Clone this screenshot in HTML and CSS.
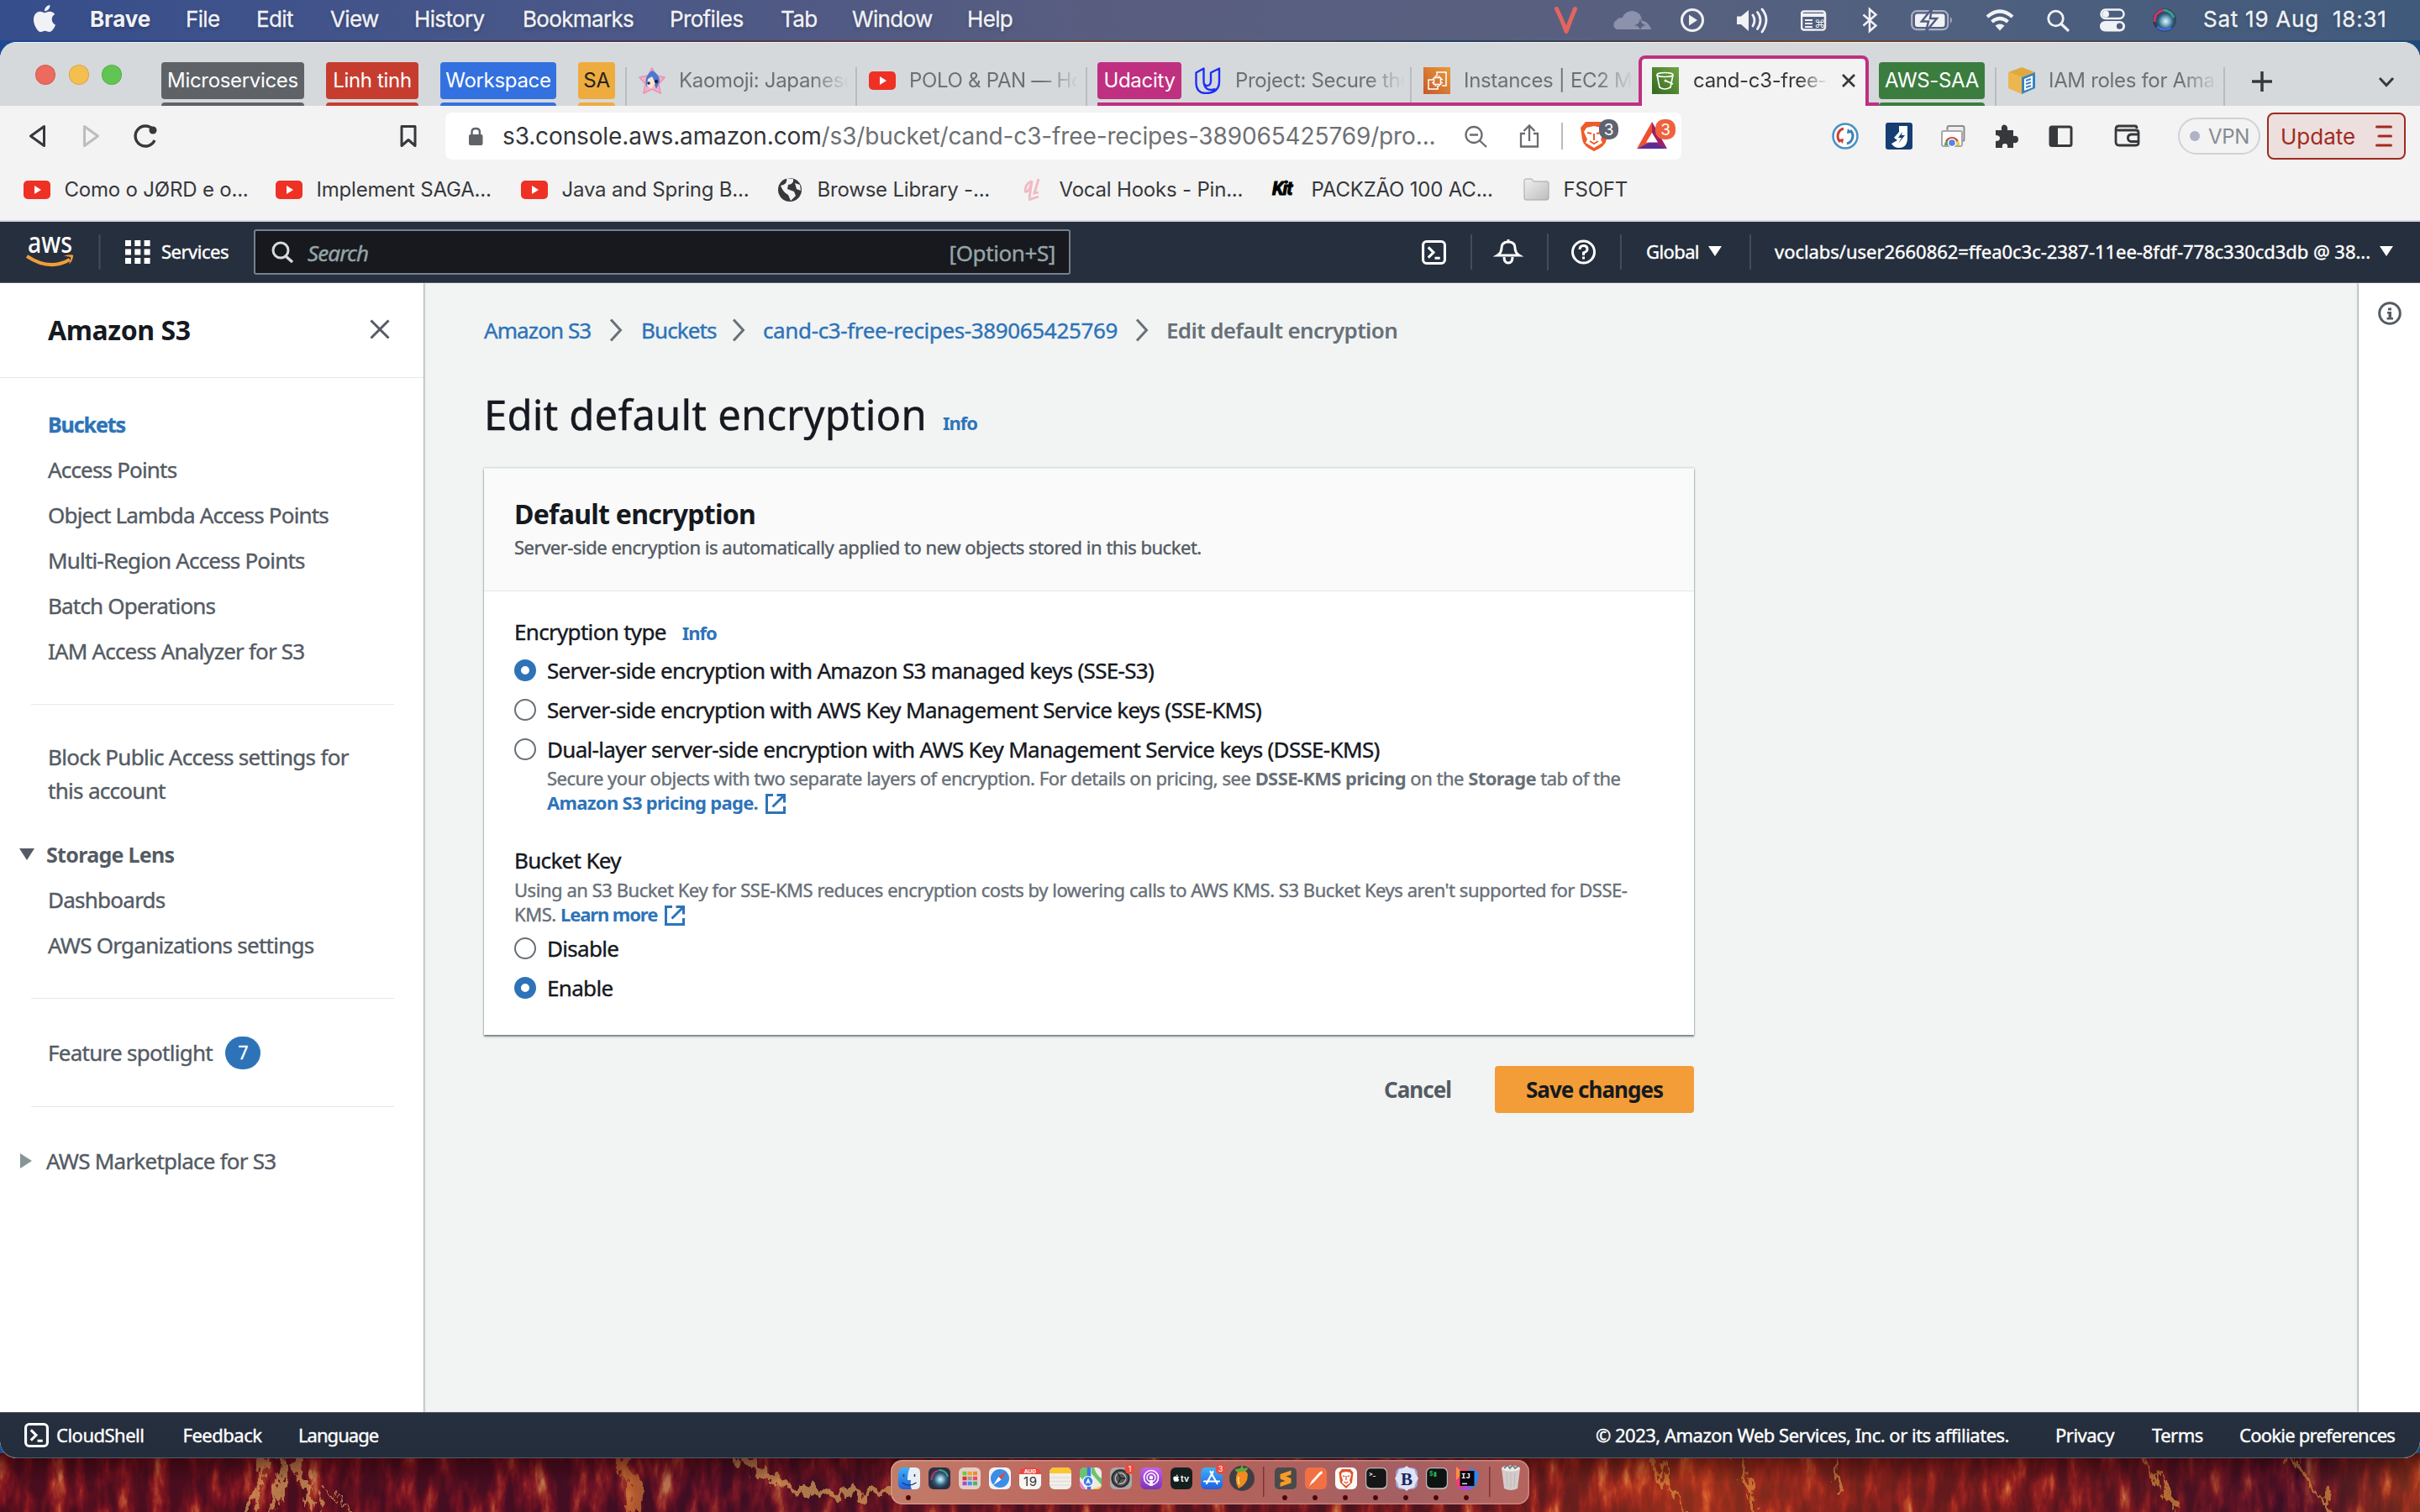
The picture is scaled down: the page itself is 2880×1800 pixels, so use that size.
FILE: index.html
```html
<!DOCTYPE html>
<html lang="en">
<head>
<meta charset="utf-8">
<title>cand-c3-free-recipes - S3 bucket</title>
<link rel="stylesheet" href="styles.css">
</head>
<body>
<svg class="defs" width="0" height="0">
  <symbol id="yt" viewBox="0 0 32 22"><rect width="32" height="22" rx="5" fill="#ee3124"/><path d="M13 6l8 5-8 5z" fill="#fff"/></symbol>
  <symbol id="ext" viewBox="0 0 26 26"><path d="M10 2.5H2.5v21h21V16M14.500 2.500h9v9M23 3L9.500 16.500" fill="none" stroke="#2e73b8" stroke-width="3"/></symbol>
  <symbol id="shell" viewBox="0 0 28 28"><rect x="1.500" y="1.500" width="25" height="25" rx="4" fill="none" stroke="#fff" stroke-width="3"/><path d="M7.500 8l6 6-6 6M15 20.500h6" fill="none" stroke="#fff" stroke-width="3"/></symbol>
  <symbol id="crumb" viewBox="0 0 16 28"><path d="M2 1.500L13.500 14 2 26.500" fill="none" stroke="#687078" stroke-width="3"/></symbol>
  <radialGradient id="siri" cx=".55" cy=".55" r=".55"><stop offset="0" stop-color="#e4f6fa"/><stop offset=".3" stop-color="#7fb4c8"/><stop offset=".6" stop-color="#2d5a78"/><stop offset="1" stop-color="#2a2b40"/></radialGradient>
  <linearGradient id="blue" x2="0" y2="1"><stop stop-color="#3fb0f7"/><stop offset="1" stop-color="#2160dd"/></linearGradient>
  <linearGradient id="folder" x2="1" y2="1"><stop stop-color="#f0f0f0"/><stop offset="1" stop-color="#bdbdbd"/></linearGradient>
  <linearGradient id="ec2" x1="0" y1="1" x2="1" y2="0"><stop stop-color="#c45a2a"/><stop offset="1" stop-color="#eb9a3c"/></linearGradient>
  <linearGradient id="s3g" x1="0" y1="1" x2="1" y2="0"><stop stop-color="#33691e"/><stop offset="1" stop-color="#6fa544"/></linearGradient>
  <linearGradient id="pod" x2="0" y2="1"><stop stop-color="#c45ff0"/><stop offset="1" stop-color="#7a33b8"/></linearGradient>
</svg>

<div class="desktop">
  <svg class="wallpaper" width="2880" height="70" viewBox="0 0 2880 70">
    <defs>
      <filter id="strands" x="0" y="0" width="100%" height="100%" color-interpolation-filters="sRGB">
        <feTurbulence type="fractalNoise" baseFrequency=".05 .016" numOctaves="5" seed="4"/>
        <feColorMatrix values="2 0 0 0 -.68  2 0 0 0 -.68  2 0 0 0 -.68  0 0 0 0 1"/>
        <feComponentTransfer>
          <feFuncR type="table" tableValues=".2 .29 .4 .55 .72 .85"/>
          <feFuncG type="table" tableValues=".05 .06 .07 .12 .3 .6"/>
          <feFuncB type="table" tableValues=".12 .11 .13 .13 .18 .35"/>
        </feComponentTransfer>
      </filter>
      <filter id="rough" x="-5%" y="-20%" width="110%" height="140%"><feTurbulence type="fractalNoise" baseFrequency=".09 .04" numOctaves="4" seed="7"/><feDisplacementMap in="SourceGraphic" scale="34" xChannelSelector="R" yChannelSelector="G"/></filter>
      <linearGradient id="shade" x2="0" y2="1"><stop stop-color="#200" stop-opacity=".55"/><stop offset=".5" stop-color="#200" stop-opacity="0"/></linearGradient>
      <linearGradient id="warm"><stop offset=".1" stop-color="#8a1020" stop-opacity=".25"/><stop offset=".3" stop-color="#5a1030" stop-opacity=".3"/><stop offset=".6" stop-color="#b0301a" stop-opacity=".2"/><stop offset=".7" stop-color="#e0501a" stop-opacity=".5"/><stop offset=".84" stop-color="#b02a1c" stop-opacity=".3"/><stop offset=".95" stop-color="#401030" stop-opacity=".4"/><stop offset="1" stop-color="#e0601a" stop-opacity=".4"/></linearGradient>
    </defs>
    <rect width="2880" height="70" filter="url(#strands)"/>
    <rect width="2880" height="70" fill="url(#warm)"/>
    <g fill="none" stroke="#d8a45c" opacity=".7" filter="url(#rough)">
      <path d="M318 0q-8 40-26 70M340 0l-14 70" stroke-width="7"/><path d="M352 5q14 40 24 65" stroke-width="9"/><path d="M380 34l42 36" stroke-width="2"/>
      <path d="M735 0q30 60 20 70" stroke="#cc7434" stroke-width="15"/><path d="M880 0q40 40 90 46t90-4" stroke-width="10"/>
      <path d="M1960 0l48 70M2068 0l20 70M2185 0v50M2550 0l40 70M2720 0l60 70" stroke="#d9903a" stroke-width="5"/>
    </g>
    <rect width="2880" height="70" fill="url(#shade)"/>
  </svg>

  <header class="menubar">
    <svg width="67" height="48" viewBox="40 0 67 48"><path transform="translate(37 6) scale(1.333)" fill="#f1f2f6" d="M12.152 6.896c-.948 0-2.415-1.078-3.960-1.040-2.040.027-3.910 1.183-4.961 3.014-2.117 3.675-.546 9.103 1.519 12.090 1.013 1.454 2.208 3.090 3.792 3.039 1.520-.065 2.090-.987 3.935-.987 1.831 0 2.350.987 3.960.948 1.637-.026 2.676-1.480 3.676-2.948 1.156-1.688 1.636-3.325 1.662-3.415-.039-.013-3.182-1.221-3.220-4.857-.026-3.040 2.480-4.494 2.597-4.559-1.429-2.090-3.623-2.324-4.390-2.376-2-.156-3.675 1.090-4.610 1.090zM15.530 3.830c.843-1.012 1.400-2.427 1.245-3.830-1.207.052-2.662.805-3.532 1.818-.780.896-1.454 2.338-1.273 3.714 1.338.104 2.715-.688 3.559-1.701"/></svg>
    <b>Brave</b><span>File</span><span>Edit</span><span>View</span><span>History</span><span>Bookmarks</span><span>Profiles</span><span>Tab</span><span>Window</span><span>Help</span>
    <svg width="28" height="48" viewBox="1850 0 28 48"><path d="M1852.500 10.500q7 14 11.500 27 4.500-13 10.500-27" fill="none" stroke="#e5645f" stroke-width="5" stroke-linecap="round" stroke-linejoin="round"/></svg>
    <svg width="48" height="48" viewBox="1919 0 48 48"><path d="M1924 35a6 6 0 0 1 0-11q1-3 7-3 3-8 12-8 10 1 11 12 6-1 11 9v1z" fill="#8c92ab"/><path d="M1952 22q1 8 8 8-7 0-8 6-1-6-8-6 7 0 8-8" fill="#5b6080"/></svg>
    <svg width="28" height="48" viewBox="2000 0 28 48"><circle cx="2014" cy="24" r="12.500" fill="none" stroke="#f1f2f6" stroke-width="3"/><path d="M2010 17.500l10 6.500-10 6.500z" fill="#f1f2f6"/></svg>
    <svg width="40" height="48" viewBox="2067 0 40 48"><path d="M2067 19.500h5l9-7.500v25l-9-8h-5z" fill="#f1f2f6"/><path d="M2086 18q4 6 0 13M2091.500 14.500q7 9 0 20M2097 11q10 12 0 27" fill="none" stroke="#f1f2f6" stroke-width="2.800" stroke-linecap="round"/></svg>
    <svg width="31" height="48" viewBox="2143 0 31 48"><rect x="2144" y="13.500" width="28" height="22" rx="3" fill="none" stroke="#f1f2f6" stroke-width="2.600"/><path d="M2144 16h28v4h-28z" fill="#f1f2f6"/><path d="M2148 24h9M2148 28h9M2148 32h9" stroke="#f1f2f6" stroke-width="2"/><text x="2159" y="33" font-family="DejaVu Sans" font-size="13" fill="#f1f2f6">⌘</text></svg>
    <svg width="20" height="48" viewBox="2216 0 20 48"><path d="M2217.500 17.500l15 13-7.500 6.500V11l7.500 6.500-15 13" fill="none" stroke="#f1f2f6" stroke-width="2.500"/></svg>
    <svg width="52" height="48" viewBox="2274 0 52 48"><rect x="2275.200" y="13.200" width="43" height="22" rx="6" fill="none" stroke="#aab0c4" stroke-width="2.200"/><rect x="2279" y="16.500" width="35.500" height="15.500" rx="3" fill="#f1f2f6"/><path d="M2321 20q4 4 0 8z" fill="#aab0c4"/><path d="M2299 10.500l-12 15h8l-3 12 13-15.500h-8z" fill="#f1f2f6" stroke="#515c81" stroke-width="2.500"/></svg>
    <svg width="36" height="48" viewBox="2363 0 36 48"><path d="M2365 20q15-13 30 0M2370.500 26q9.500-8 19 0" fill="none" stroke="#f1f2f6" stroke-width="4.200"/><path d="M2374.500 30.500q5.500-4 11 0l-5.500 6z" fill="#f1f2f6"/></svg>
    <svg width="28" height="48" viewBox="2436 0 28 48"><circle cx="2446.500" cy="22" r="8.800" fill="none" stroke="#f1f2f6" stroke-width="2.800"/><path d="M2453 28.500l8 7.500" stroke="#f1f2f6" stroke-width="3.200" stroke-linecap="round"/></svg>
    <svg width="32" height="48" viewBox="2499 0 32 48"><rect x="2500.500" y="11.500" width="27" height="10.500" rx="5.200" fill="none" stroke="#f1f2f6" stroke-width="2.500"/><circle cx="2506" cy="16.700" r="4" fill="#f1f2f6"/><rect x="2499" y="25" width="30" height="12.500" rx="6.200" fill="#f1f2f6"/><circle cx="2522.500" cy="31.200" r="3.600" fill="#515c81"/></svg>
    <svg width="28" height="48" viewBox="2562 0 28 48"><circle cx="2576" cy="24" r="13.800" fill="url(#siri)"/><path d="M2564 26q0-12 11-14" fill="none" stroke="#c8386c" stroke-width="3"/><path d="M2575 12q9 1 12 9" fill="none" stroke="#3a9f8c" stroke-width="3"/><path d="M2567 32q8 6 17 1" fill="none" stroke="#4468d8" stroke-width="3"/></svg>
    <span class="clock">Sat 19 Aug&nbsp; 18:31</span>
  </header>

  <section class="window">
    <div class="tabs">
      <div class="lights"><i class="red"></i><i class="yellow"></i><i class="green"></i></div>
      <div class="chip gray"><span>Microservices</span></div>
      <div class="chip crimson"><span>Linh tinh</span></div>
      <div class="chip azure"><span>Workspace</span></div>
      <div class="chip amber"><span>SA</span></div>
      <div class="tab first"><svg width="32" height="32" viewBox="0 0 32 32"><path d="M16 1l5 9 10 2-7 8 2 11-10-5-10 5 2-11-7-8 10-2z" fill="#f3b2c8" stroke="#eb8fb4" stroke-width="1.500"/><path d="M16 4q9 4 9 13l-4 9-5-14-6 12q-5-12 6-20" fill="#4a79d0"/><path d="M11 14l5-3 4 8-5 7-5-4z" fill="#f8e3d6"/><circle cx="12" cy="19" r="1.700" fill="#223"/><circle cx="21" cy="17" r="2.200" fill="#223"/></svg><span>Kaomoji: Japanese</span></div>
      <div class="tab last"><svg width="32" height="32"><use href="#yt" width="32" height="22" y="5"/></svg><span>POLO &amp; PAN — Ho</span></div>
      <div class="group">
        <div class="chip pink"><span>Udacity</span></div>
        <div class="tab plain"><svg width="32" height="32" viewBox="0 0 32 32"><path d="M1.500 6.500l9-5v15.500q0 5 4 5t4.500-5V6.500l10-5V17q0 14-17 14-10.500-1-10.500-12zM10.500 17q1 13 14 9" fill="none" stroke="#1d2ff5" stroke-width="2.400" stroke-linejoin="round"/></svg><span>Project: Secure the</span></div>
        <div class="tab"><svg width="32" height="32" viewBox="0 0 32 32"><rect width="32" height="32" fill="url(#ec2)"/><path d="M16 11V6h11v16h-5M11 15H6v11h11v-4" fill="none" stroke="#fff" stroke-width="1.500"/><path d="M12.500 12.500h8v8h-8zM14.500 12v-2M18.500 12v-2M14.500 23v-2M18.500 23v-2M12 14.500h-2M12 18.500h-2M23 14.500h-2M23 18.500h-2" fill="none" stroke="#fff" stroke-width="1.500"/></svg><span>Instances | EC2 Ma</span></div>
        <div class="active"><svg width="32" height="32" viewBox="0 0 32 32"><rect width="32" height="32" fill="url(#s3g)"/><ellipse cx="15.500" cy="9" rx="9.500" ry="2.500" fill="none" stroke="#fff" stroke-width="1.600"/><path d="M6 9l3 15q6 4 13 0l3-15M16 16l9 4" fill="none" stroke="#fff" stroke-width="1.600"/><circle cx="16" cy="16" r="1.500" fill="#fff"/></svg><span>cand-c3-free-re</span><svg width="16" height="32" viewBox="0 0 16 32"><path d="M1 9l14 14M15 9L1 23" stroke="#36383c" stroke-width="2.800"/></svg></div>
      </div>
      <div class="chip forest"><span>AWS-SAA</span></div>
      <div class="tab iam"><svg width="32" height="32" viewBox="0 0 32 32"><path d="M16 0l16 6-16 6L0 6z" fill="#e0a93f"/><path d="M0 6l16 6v20L0 25z" fill="#ecb74e"/><path d="M16 12l16-6v19l-16 7z" fill="#3b82bd"/><path d="M19 14l10-4v14l-10 4z" fill="#fff"/><path d="M21 16l6-2M21 20l6-2M21 24l6-2" stroke="#3b82bd" stroke-width="2"/></svg><span>IAM roles for Amaz</span></div>
      <svg width="60" height="76" viewBox="2648 50 60 76"><path d="M2680 96h24M2692 84v24" stroke="#36383c" stroke-width="3.500"/></svg>
      <svg class="push" width="60" height="76" viewBox="2820 50 60 76"><path d="M2832 92l8 8.500 8-8.500" fill="none" stroke="#36383c" stroke-width="3"/></svg>
    </div>

    <div class="toolbar">
      <svg width="530" height="74" viewBox="0 126 530 74" fill="none" stroke="#36383c" stroke-width="3" stroke-linejoin="round"><path d="M52.500 150.500v23L36.500 162z"/><path d="M100.500 150.500v23l16-11.500z" stroke="#bdbdbd"/><path d="M184 167a12 12 0 1 1-2-13" stroke-width="3.400"/><circle cx="182" cy="155" r="4.500" fill="#36383c" stroke="none"/><path d="M478 150.500h16v23l-8-7-8 7z"/></svg>
      <div class="url">
        <svg width="68" height="56" viewBox="530 134 68 56"><rect x="558" y="160" width="16.500" height="13" rx="2" fill="#5f6368"/><path d="M561.500 161v-4q0-4 4.700-4t4.700 4v4" fill="none" stroke="#5f6368" stroke-width="2.400"/></svg>
        <span class="addr"><em>s3.console.aws.amazon.com</em>/s3/bucket/cand-c3-free-recipes-389065425769/pro...</span>
        <svg width="263" height="56" viewBox="1738 134 263 56" fill="none" stroke="#6a6c70" stroke-width="2.300"><circle cx="1754" cy="160.500" r="9.500"/><path d="M1761 167.500l8 7.500M1749 160.500h10M1815 159h-5v15.500h20V159h-5M1820 168v-17M1813.500 156l6.500-6.500 6.500 6.500"/><path d="M1859 146v32" stroke="#bbb" stroke-width="2"/><path d="M1887 145h22l4 7-1 14q-1 8-15 14-13-6-14-14l-2-14z" fill="#ee5c2c" stroke="none"/><path d="M1888 152l9-2 9 2 3 5-4 9 2 4-10 6-10-6 2-4-4-9z" fill="#fff" stroke="none"/><path d="M1889 158l5 1M1905 158l-5 1M1897 159v8M1892 168l5 3 5-3" stroke="#ee5c2c" stroke-width="2"/><rect x="1903" y="142" width="23" height="24" rx="10" fill="#5f6270" stroke="none"/><path d="M1966 145l-18 32 18-8z" fill="#ee5030" stroke="none"/><path d="M1966 145l18 32-18-8z" fill="#9e2064" stroke="none"/><path d="M1948 177h36l-18-9z" fill="#5e2d91" stroke="none"/><path d="M1966 158l-7 11.500h14z" fill="#fff" stroke="none"/><rect x="1970" y="142" width="24" height="24" rx="10" fill="#f0623c" stroke="none"/><g fill="#fff" stroke="none" font-family="Inter, sans-serif" font-size="19" text-anchor="middle"><text x="1914.500" y="161">3</text><text x="1982" y="161">3</text></g></svg>
      </div>
      <div class="exts">
        <svg viewBox="0 0 32 32"><circle cx="16" cy="16" r="14.500" fill="#fff" stroke="#4a90c4" stroke-width="2.500"/><path d="M14 7a9.500 9.500 0 0 0-4 16" fill="none" stroke="#c8402f" stroke-width="3"/><path d="M8 20l5 5 1-6z" fill="#c8402f"/><path d="M18 25a9.500 9.500 0 0 0 4-16" fill="none" stroke="#3c7fb5" stroke-width="3"/><path d="M24 12l-5-5-1 6z" fill="#3c7fb5"/></svg>
        <svg viewBox="0 0 32 32"><rect width="32" height="32" rx="3" fill="#153e74"/><path d="M16 4h10v14q0 12-10 12-6 0-9-5l7-4-4-3 6-7z" fill="#fff"/><path d="M20 11l-5 7h4l-4 7 8-10h-4z" fill="#153e74"/></svg>
        <svg viewBox="0 0 32 32"><rect x="9.500" y="4" width="20" height="18" rx="2" fill="#eee" stroke="#8b8b8b" stroke-width="2"/><rect x="3" y="10" width="24" height="18" rx="2" fill="#fff" stroke="#a8a8a8" stroke-width="2"/><path d="M6 27a9 9 0 0 1 18 0z" fill="#4ba658"/><path d="M7 22a9 9 0 0 1 16 0z" fill="#dd4b3e"/><path d="M15 27l8-6 1 6z" fill="#f7cb46"/><circle cx="15" cy="24" r="4.500" fill="#4c86ec" stroke="#fff" stroke-width="1.500"/></svg>
        <svg viewBox="0 0 32 32"><path d="M3 9h7q-1-6 3-6.500Q18 3 17 9h7v7q6-1 6 4t-6 4v6h-7q1-5-3-5t-3 5H3v-8q5 0 5-3.500T3 15z" fill="#36383c"/></svg>
        <svg viewBox="0 0 32 32"><rect x="4" y="5" width="25" height="22.500" rx="2" fill="none" stroke="#36383c" stroke-width="3"/><path d="M4 5h9v22H4z" fill="#36383c"/></svg>
        <svg class="wallet" viewBox="0 0 32 32" fill="none" stroke="#36383c" stroke-width="2.800"><path d="M2 8q0-4 4-4h19q2 0 2 3M2 8v15q0 4 4 4h20q3 0 3-3V12q0-3-3-3H5q-3 0-3-1M29 14h-9a4.300 4.300 0 0 0 0 8.500h9"/></svg>
      </div>
      <div class="vpn"><i></i>VPN</div>
      <div class="update"><span>Update</span><svg width="20" height="28" viewBox="0 0 20 28"><path d="M1.500 3h17M4 14h14.500M1.500 25h17" stroke="#a02b20" stroke-width="3" stroke-linecap="round"/></svg></div>
    </div>

    <div class="bookmarks">
      <svg width="32" height="52"><use href="#yt" width="32" height="22" y="15"/></svg><span>Como o JØRD e o...</span>
      <svg width="32" height="52"><use href="#yt" width="32" height="22" y="15"/></svg><span>Implement SAGA...</span>
      <svg width="32" height="52"><use href="#yt" width="32" height="22" y="15"/></svg><span>Java and Spring B...</span>
      <svg width="30" height="52" viewBox="0 0 30 52"><circle cx="14" cy="26" r="14" fill="#36383c"/><path d="M3 21q9-2 7-9l8 1q1 6-6 7l-1 5 8 3 2 5-6 6-3-7q-6-3-9-11M20 18l6 2 1 7-5-2z" fill="#f2f2f2"/></svg><span>Browse Library -...</span>
      <svg width="24" height="52" viewBox="0 0 24 52"><path d="M10 16q-7 3-7 12 5 2 8-13l-3 21M19 13l-5 17 5-1M7 38l12-4" fill="none" stroke="#f0b9c4" stroke-width="2.800"/></svg><span>Vocal Hooks - Pin...</span>
      <span class="kit">Kit</span><span>PACKZÃO 100 AC...</span>
      <svg width="32" height="52" viewBox="0 0 32 52"><path d="M1 15q0-2 2-2h7l2 3h16q2 0 2 2v18q0 2-2 2H3q-2 0-2-2z" fill="url(#folder)" stroke="#a5a5a5"/></svg><span>FSOFT</span>
    </div>

    <div class="console-bar">
      <svg width="192" height="73" viewBox="0 264 192 73"><text x="33" y="301" font-family="Noto Sans" font-size="35" font-weight="500" fill="#fff" textLength="53" lengthAdjust="spacingAndGlyphs">aws</text><path d="M32 305q27 18 51 4" fill="none" stroke="#f29d38" stroke-width="4"/><path d="M76 304.500q13-3 11 1-1 6-5 9 3-8 2-8.500-3-1-8-1.500" fill="#f29d38"/><path d="M118.500 279v42" stroke="#414d5c" stroke-width="2"/><path d="M149 289.500h30M149 300h30M149 310.500h30" stroke="#fff" stroke-width="7" stroke-dasharray="7 4.300"/></svg>
      <span class="services">Services</span>
      <div class="search"><svg width="64" height="54" viewBox="302 273 64 54"><circle cx="334" cy="298" r="9" fill="none" stroke="#d5dbdb" stroke-width="3"/><path d="M340 305l8 7" stroke="#d5dbdb" stroke-width="3.500"/></svg><em>Search</em><span>[Option+S]</span></div>
      <svg class="tools" width="271" height="73" viewBox="1688 264 271 73" fill="none" stroke="#fff" stroke-width="3"><use href="#shell" x="1692" y="286" width="29" height="29"/><path d="M1751 279v42M1842 278v44M1929 279v42" stroke="#414d5c" stroke-width="2"/><path d="M1782 304q5-3 5-9 0-7 8-7t8 7q0 6 5 9zM1795 285v3"/><path d="M1790 306q0 7 5 7t5-7"/><circle cx="1884.500" cy="300" r="13"/><path d="M1880 297q0-4.500 4.500-4.500t4.500 4q0 3-4.500 4.500v3M1884.500 305.500v3"/></svg>
      <span class="region">Global</span><span class="account">voclabs/user2660862=ffea0c3c-2387-11ee-8fdf-778c330cd3db @ 38...</span>
    </div>

    <div class="workspace">
      <aside class="side">
        <div class="side-head"><h2>Amazon S3</h2><svg width="24" height="24" viewBox="0 0 24 24"><path d="M1.500 1.500l21 21M22.500 1.500l-21 21" stroke="#545b64" stroke-width="3"/></svg></div>
        <nav>
          <a class="current">Buckets</a><a>Access Points</a><a>Object Lambda Access Points</a><a>Multi-Region Access Points</a><a>Batch Operations</a><a>IAM Access Analyzer for S3</a>
          <hr>
          <a class="wrap">Block Public Access settings for this account</a>
          <div class="section"><svg width="20" height="16" viewBox="0 0 20 16"><path d="M1 1h18l-9 14z" fill="#545b64"/></svg><b>Storage Lens</b></div>
          <a>Dashboards</a><a>AWS Organizations settings</a>
          <hr>
          <a class="spot">Feature spotlight<span>7</span></a>
          <hr class="tight">
          <div class="section market"><svg width="20" height="20" viewBox="0 0 20 20"><path d="M2 1l14 9-14 9z" fill="#879596"/></svg><span>AWS Marketplace for S3</span></div>
        </nav>
      </aside>
      <main>
        <div class="crumbs"><a>Amazon S3</a><svg><use href="#crumb"/></svg><a>Buckets</a><svg><use href="#crumb"/></svg><a class="bucket">cand-c3-free-recipes-389065425769</a><svg><use href="#crumb"/></svg><b>Edit default encryption</b></div>
        <h1>Edit default encryption<a class="info">Info</a></h1>
        <section class="card">
          <div class="card-head"><h3>Default encryption</h3><p>Server-side encryption is automatically applied to new objects stored in this bucket.</p></div>
          <div class="card-body">
            <div class="label">Encryption type<a class="info">Info</a></div>
            <div class="radio on"><i></i>Server-side encryption with Amazon S3 managed keys (SSE-S3)</div>
            <div class="radio"><i></i>Server-side encryption with AWS Key Management Service keys (SSE-KMS)</div>
            <div class="radio"><i></i>Dual-layer server-side encryption with AWS Key Management Service keys (DSSE-KMS)</div>
            <p class="hint inset">Secure your objects with two separate layers of encryption. For details on pricing, see <b>DSSE-KMS pricing</b> on the <b>Storage</b> tab of the<br><a>Amazon S3 pricing page.</a><svg><use href="#ext"/></svg></p>
            <div class="label second">Bucket Key</div>
            <p class="hint">Using an S3 Bucket Key for SSE-KMS reduces encryption costs by lowering calls to AWS KMS. S3 Bucket Keys aren't supported for DSSE-<br>KMS. <a class="learn">Learn more</a><svg><use href="#ext"/></svg></p>
            <div class="radio after"><i></i>Disable</div>
            <div class="radio on"><i></i>Enable</div>
          </div>
        </section>
        <div class="actions"><span>Cancel</span><button>Save changes</button></div>
      </main>
      <aside class="rail"><svg width="28" height="28" viewBox="0 0 28 28"><circle cx="14" cy="14" r="12.300" fill="none" stroke="#545b64" stroke-width="3"/><path d="M12 7.500h4v3h-4zM11 12h5v7h2v2.500h-7.500V19h2v-4.500H11z" fill="#545b64"/></svg></aside>
    </div>

    <footer class="foot"><svg width="29" height="29"><use href="#shell"/></svg><span>CloudShell</span><span>Feedback</span><span class="lang">Language</span><span>© 2023, Amazon Web Services, Inc. or its affiliates.</span><span>Privacy</span><span>Terms</span><span class="cookie">Cookie preferences</span></footer>
  </section>

  <div class="dock">
    <svg viewBox="0 0 36 52"><rect x="5" y="9" width="26" height="26" rx="6" fill="url(#blue)"/><path d="M19 9h6q6 0 6 6v14q0 6-6 6h-4q-2-4-1-11h-4q0-9 3-15" fill="#e9eef4"/><path d="M11.500 17v3M24.500 17v3M9.500 27q8 6 17 0" fill="none" stroke="#1b3f66" stroke-width="1.500"/><circle cx="17" cy="45" r="2.900" fill="#4a0808"/></svg>
    <svg viewBox="0 0 36 52"><rect x="5" y="9" width="26" height="26" rx="6" fill="#2c2f42"/><circle cx="18" cy="22" r="11" fill="url(#siri)"/><path d="M8.500 24q0-9 8-11.500" fill="none" stroke="#a83a62" stroke-width="2.200"/><path d="M17 12q9 0 11 8" fill="none" stroke="#3a9f8c" stroke-width="2.200"/></svg>
    <svg viewBox="0 0 36 52"><rect x="5" y="9" width="26" height="26" rx="6" fill="#e3cfc8"/><path d="M9.500 16h5" stroke="#6c4" stroke-width="4.500"/><path d="M15.700 16h5" stroke="#f4a02c" stroke-width="4.500"/><path d="M22 16h5" stroke="#ef8a30" stroke-width="4.500"/><path d="M9.500 22h5" stroke="#d33" stroke-width="4.500"/><path d="M15.700 22h5" stroke="#999" stroke-width="4.500"/><path d="M22 22h5" stroke="#f04a5e" stroke-width="4.500"/><path d="M9.500 28h5" stroke="#a44bd6" stroke-width="4.500"/><path d="M15.700 28h5" stroke="#3f8ff0" stroke-width="4.500"/><path d="M22 28h5" stroke="#43b774" stroke-width="4.500"/></svg>
    <svg viewBox="0 0 36 52"><rect x="5" y="9" width="26" height="26" rx="6" fill="#f2f2f2"/><circle cx="18" cy="22" r="11" fill="#3b8ee6"/><path d="M26 14l-6.500 9.500L16.500 20z" fill="#e8453c"/><path d="M10 30l6.500-10 3 3.500z" fill="#fff"/></svg>
    <svg viewBox="0 0 36 52"><rect x="5" y="9" width="26" height="26" rx="6" fill="#f8f6f4"/><path d="M5 17v-2q0-6 6-6h14q6 0 6 6v2z" fill="#e64b42"/><text x="18" y="15.800" font-size="6.500" font-weight="700" fill="#fff" text-anchor="middle">AUG</text><text x="18" y="31" font-size="15" fill="#333" text-anchor="middle" textLength="16">19</text></svg>
    <svg viewBox="0 0 36 52"><rect x="5" y="9" width="26" height="26" rx="6" fill="#f1eeea"/><path d="M5 16v-1q0-6 6-6h14q6 0 6 6v1z" fill="#fbc62f"/><path d="M5 21h26M5 25.500h26M5 30h26" stroke="#d8d4ce" stroke-width=".8"/></svg>
    <svg viewBox="0 0 36 52"><rect x="5" y="9" width="26" height="26" rx="6" fill="#eceae2"/><path d="M5 12q3-3 6-3h4v20l-10-9z" fill="#69c46d"/><path d="M22 9q3 10 9 13v8L19 16V9z" fill="#69c46d"/><path d="M16 9v26" stroke="#3877e8" stroke-width="4.500"/><path d="M5 25l7 10H9q-4-2-4-6z" fill="#e085cf"/><path d="M20 35l11-4q-1 4-6 4z" fill="#f5c93d"/><circle cx="15" cy="25.500" r="6" fill="#3b7cea" stroke="#fff" stroke-width="1.200"/><path d="M15 21.500l3 7-3-1.500-3 1.500z" fill="#fff"/></svg>
    <svg viewBox="0 0 36 52"><rect x="5" y="9" width="26" height="26" rx="6" fill="#a9a8a8"/><circle cx="17.500" cy="22" r="10" fill="#55565a" stroke="#2c2d30" stroke-width="2.200"/><circle cx="17.500" cy="22" r="6.300" fill="none" stroke="#c4c4c4" stroke-width="1.200"/><path d="M17.500 22h6M17.500 22l-3-6M17.500 22l-3 6" stroke="#222" stroke-width="1.600"/><circle cx="28.500" cy="11" r="6" fill="#ea4b3e"/><text x="28.500" y="14.200" font-size="9" fill="#fff" text-anchor="middle">1</text></svg>
    <svg viewBox="0 0 36 52"><rect x="5" y="9" width="26" height="26" rx="6" fill="url(#pod)"/><circle cx="18" cy="21" r="8.500" fill="none" stroke="#fff" stroke-width="1.600"/><circle cx="18" cy="21" r="5" fill="none" stroke="#fff" stroke-width="1.400"/><circle cx="18" cy="21" r="2.200" fill="#fff"/><path d="M18 24v7" stroke="#fff" stroke-width="3.600"/></svg>
    <svg viewBox="0 0 36 52"><rect x="5" y="9" width="26" height="26" rx="6" fill="#14201f"/><text x="17" y="25.800" font-size="10.500" font-weight="600" fill="#fff">tv</text><path transform="translate(7.500 17.300) scale(.36)" fill="#fff" d="M12 6.900c-1 0-2.400-1.100-4-1-2 0-3.900 1.100-4.900 3-2.100 3.600-.5 9 1.500 12 1 1.500 2.200 3.100 3.800 3 1.500 0 2.100-1 4-1 1.800 0 2.300 1 4 1 1.600 0 2.600-1.500 3.600-3 1.200-1.700 1.600-3.300 1.700-3.400-5-2-4-8-.6-9.400-1.500-2-3.700-2.300-4.400-2.300-2-.2-3.800 1.100-4.700 1.100zM15.500 3.800c.8-1 1.400-2.400 1.200-3.800-2 0-5 2-4.700 5.500 1.300.1 2.700-.7 3.500-1.700"/></svg>
    <svg viewBox="0 0 36 52"><rect x="5" y="9" width="26" height="26" rx="6" fill="url(#blue)"/><path d="M19.500 14L12 28M16.500 14l8 14M9 25.500h18" stroke="#fff" stroke-width="2.200" stroke-linecap="round"/><circle cx="28.500" cy="11" r="6" fill="#ea4b3e"/><text x="28.500" y="14.200" font-size="9" fill="#fff" text-anchor="middle">3</text></svg>
    <svg viewBox="0 0 36 52"><circle cx="18" cy="22" r="15" fill="#3d3f45"/><path d="M13 14q8-5 12 3 0 12-11 17-6-10-1-20" fill="#f28a20"/><path d="M14 20q-1 6 1 9" stroke="#ffd27a" stroke-width="2" fill="none"/><path d="M18 14q-8 2-8-3l6-1 2-4 2 4 5-1q0 5-7 5" fill="#6aa53a"/></svg>
    <i class="sep"></i>
    <svg viewBox="0 0 36 52"><rect x="5" y="9" width="26" height="26" rx="5" fill="#4a4a4b"/><path d="M24.500 12.500v5l-6 2 6 2.500v5.500l-13 4.500v-5l6-2-6-2.500V17z" fill="#f79a27"/><circle cx="17" cy="45" r="2.900" fill="#4a0808"/></svg>
    <svg viewBox="0 0 36 52"><rect x="5" y="9" width="26" height="26" rx="6" fill="#f27144"/><path d="M10 31l3-6 9-10 2 2-8 9zM22 15l3-2 1 3-3 2z" fill="#fff"/><circle cx="17" cy="45" r="2.900" fill="#4a0808"/></svg>
    <svg viewBox="0 0 36 52"><rect x="5" y="9" width="26" height="26" rx="6" fill="#fafafa"/><path d="M13 11h10l3.500 4-1.500 12-7 7-7-7-1.500-12z" fill="#e0532c"/><path d="M13 15l5-1 5 1 1 3-2 6 1 3-5 4-5-4 1-3-2-6z" fill="#fff"/><path d="M14 19l2.500.6M22 19l-2.500.6M18 19v5M15.500 26l2.500 1.500 2.500-1.500" fill="none" stroke="#e0532c" stroke-width="1.300"/><circle cx="17" cy="45" r="2.900" fill="#4a0808"/></svg>
    <svg viewBox="0 0 36 52"><rect x="5" y="9" width="26" height="26" rx="6" fill="#b9b9b9"/><rect x="6.200" y="10.200" width="23.600" height="23" rx="5" fill="#161616"/><text x="9" y="19" font-size="7" font-weight="700" fill="#eee">&gt;_</text><circle cx="17" cy="45" r="2.900" fill="#4a0808"/></svg>
    <svg viewBox="0 0 36 52"><rect x="5" y="9" width="26" height="26" rx="7" fill="#a4a3d6"/><path d="M18 7q4 4 9 4l2 6 3 5-3 5-2 6q-5 0-9 4-4-4-9-4l-2-6-3-5 3-5 2-6q5 0 9-4" fill="#dfe3f4"/><text x="18" y="29.500" font-family="Liberation Serif" font-size="21" font-weight="700" fill="#14285e" text-anchor="middle">B</text><circle cx="17" cy="45" r="2.900" fill="#4a0808"/></svg>
    <svg viewBox="0 0 36 52"><rect x="5" y="9" width="26" height="26" rx="6" fill="#b9b9b9"/><rect x="6.200" y="10.200" width="23.600" height="23" rx="5" fill="#0e1414"/><text x="9" y="19" font-size="7" font-weight="700" fill="#2fae4f">$▮</text><circle cx="17" cy="45" r="2.900" fill="#4a0808"/></svg>
    <svg viewBox="0 0 36 52"><path d="M5 9l13 3v12L7 35 4 24z" fill="#f23c7a"/><path d="M5 8l8 8-8 8z" fill="#f7913d"/><path d="M22 8l10 8-3 14-8 6z" fill="#2b8bf0"/><path d="M7 35l12-6 3 7z" fill="#b445e0"/><rect x="9.500" y="13" width="17" height="18" fill="#0c0710"/><text x="11" y="22" font-size="9" font-family="Liberation Mono" font-weight="700" fill="#fff">IJ</text><path d="M12 28.300h6" stroke="#fff" stroke-width="1.300"/><circle cx="17" cy="45" r="2.900" fill="#4a0808"/></svg>
    <i class="sep wide"></i>
    <svg class="bin" viewBox="0 0 32 52"><path d="M5 10h22l-3 24q-8 4-16 0z" fill="#d8d6d6" opacity=".9"/><ellipse cx="16" cy="10" rx="11" ry="3.500" fill="#ecebeb"/><path d="M8 10l4-4 3 4 3-4 3 4 4-3" fill="none" stroke="#777" stroke-width="1.800"/><path d="M11 15l1 17M16 15v18M21 15l-1 17" stroke="#bbb" stroke-width="1"/></svg>
  </div>
</div>
</body>
</html>
```
FILE: styles.css
```css
* { box-sizing: border-box; }
body { margin: 0; width: 2880px; height: 1800px; overflow: hidden; font-family: "Noto Sans", sans-serif; }
svg { display: block; flex: none; }
i, em { font-style: normal; }
h1, h2, h3, p { margin: 0; }
.defs { position: absolute; }

.desktop { position: relative; display: flex; flex-direction: column; width: 2880px; height: 1800px; background: linear-gradient(90deg, #1d4a94, #40304c 20%, #6b4440 45%, #22405f 60%, #70442c 75%, #1f4a78); }
.wallpaper { position: absolute; left: 0; bottom: 0; }

/* macOS menu bar */
.menubar { display: grid; grid-template-columns: 67px 114px 84px 88px 100px 129px 175px 132px 85px 137px 699px 69px 81px 67px 76px 73px 58px 89px 73px 63px 63px 60px 240px; height: 48px; padding-left: 40px; background: linear-gradient(90deg, #364e8c, #475689 20%, #585d80 45%, #59607f 65%, #50607f 80%, #405a7c); color: #f1f2f6; font: 400 26px/45px Inter, sans-serif; letter-spacing: -.65px; white-space: nowrap; text-shadow: 0 2px 4px rgba(0,0,0,.25); -webkit-text-stroke: .3px; }
.menubar b { letter-spacing: -.14px; }
.menubar .clock { letter-spacing: .75px; }

/* browser window */
.window { position: relative; display: flex; flex-direction: column; height: 1686px; margin-top: 2px; border-radius: 20px; overflow: hidden; background: #f3f3f3; font-family: Inter, sans-serif; color: #36383c; }
.tabs { display: flex; height: 76px; background: #d5d9dc; border-top: 1px solid #eef0f1; font-size: 24px; letter-spacing: -.32px; white-space: nowrap; flex: none; }
.lights { display: flex; gap: 15.500px; width: 192px; padding: 26px 0 0 42px; }
.lights i { width: 24px; height: 24px; border-radius: 50%; border: 1px solid rgba(0,0,0,.12); }
.red { background: #ed6a5e; } .yellow { background: #f5bf4f; } .green { background: #61c554; }
.chip { display: flex; flex-direction: column; justify-content: space-between; height: 52px; margin: 23px 26px 0 0; color: #fff; --c: #5f6368; flex: none; }
.chip span { height: 44px; border-radius: 4px; background: var(--c); line-height: 43px; text-align: center; }
.chip::after { content: ""; height: 4px; border-radius: 4px 4px 0 0; background: var(--c); }
.gray { width: 170px; }
.crimson { width: 110px; --c: #c63d30; }
.azure { width: 138px; --c: #3371e0; }
.amber { width: 44px; margin-right: 12px; --c: #eeac3f; color: #222; }
.pink { width: 100px; margin-right: 0; --c: #bf3080; }
.forest { width: 126px; margin-right: 12px; --c: #3b7d3f; }
.tab { display: flex; gap: 16px; width: 274px; height: 46px; margin-top: 29px; padding-left: 14px; border-left: 2px solid #b9bdc1; color: #6c7075; line-height: 32px; flex: none; }
.tab span, .active span { width: 202px; overflow: hidden; height: 34px; -webkit-mask-image: linear-gradient(90deg, #000 78%, transparent); mask-image: linear-gradient(90deg, #000 78%, transparent); }
.tab.last { width: 276px; border-right: 2px solid #b9bdc1; margin-right: 12px; }
.tab.iam { border-right: 2px solid #b9bdc1; }
.group { display: flex; width: 930px; height: 75px; background: linear-gradient(#bf3080, #bf3080) bottom / 100% 4px no-repeat; flex: none; }
.group .tab { width: 272px; height: 42px; }
.group .plain { border-color: transparent; }
.active { display: flex; gap: 17px; width: 274px; height: 60px; margin-top: 15px; padding: 10px 0 0 12px; border: 4px solid #bf3080; border-bottom: 0; border-radius: 8px 8px 0 0; background: #f3f3f3; line-height: 32px; }
.active span { width: 160px; }
.push { margin-left: auto; }

.toolbar { display: flex; height: 74px; flex: none; }
.url { display: flex; width: 1471px; height: 56px; margin-top: 8px; border-radius: 8px; background: #fff; font-size: 28px; line-height: 56px; letter-spacing: -.13px; white-space: nowrap; color: #6e7074; }
.url em { color: #333539; }
.addr { width: 1140px; }
.exts { display: flex; gap: 32px; margin: 20px 0 0 179px; }
.exts svg { width: 32px; height: 32px; }
.exts .wallet { margin-left: 16px; }
.vpn { display: flex; align-items: center; gap: 10px; width: 98px; height: 44px; margin: 14px 0 0 44px; padding-left: 12px; border: 2px solid #d0d2d8; border-radius: 22px; font-size: 24px; letter-spacing: -.3px; color: #868a92; }
.vpn i { width: 12px; height: 12px; border-radius: 50%; background: #b0b2c6; }
.update { display: flex; align-items: center; gap: 24px; width: 165px; height: 56px; margin: 8px 0 0 8px; padding-left: 14px; border: 2px solid #a02b20; border-radius: 8px; background: #ecdfde; color: #a02b20; font-size: 26px; letter-spacing: 0; }

.bookmarks { display: grid; grid-template-columns: 48.500px 251.500px 48.500px 243.500px 48.500px 257.500px 46.500px 244.500px 43.500px 253.500px 46.500px 252.500px 47.500px 100px; height: 62px; padding-left: 28px; font-size: 24px; line-height: 51px; letter-spacing: -.2px; white-space: nowrap; flex: none; }
.kit { font: italic 700 22px/50px "Liberation Sans Narrow", Roboto, sans-serif; letter-spacing: -1px; color: #000; -webkit-text-stroke: 1px #000; }

/* console top bar */
.console-bar { display: flex; height: 75px; border-top: 2px solid #d5d9de; border-bottom: 1px solid #545b64; background: #262f3e; color: #fff; font: 400 22px/70px "Noto Sans", sans-serif; white-space: nowrap; flex: none; -webkit-text-stroke: .4px; }
.services { width: 110px; letter-spacing: -.5px; }
.search { display: flex; width: 972px; height: 54px; margin: 9px 0 0; border: 2px solid #77808a; border-radius: 3px; background: #17191f; color: #95a5a6; font-size: 26px; line-height: 52px; }
.search svg { margin: -2px 0 0 -2px; }
.search em { font-style: italic; letter-spacing: -.9px; }
.search span { margin-left: auto; padding-right: 16px; letter-spacing: -.4px; }
.tools { margin-left: 414px; }
.region::after, .account::after { content: ""; display: inline-block; border: 8px solid transparent; border-top: 12px solid #fff; border-bottom: 0; margin-left: 11px; vertical-align: 3px; }
.region { position: relative; width: 153px; letter-spacing: -.6px; }
.account { letter-spacing: -.04px; }
.region::before { content: ""; position: absolute; left: 123px; top: 15px; width: 2px; height: 42px; background: #414d5c; }

/* workspace */
.workspace { display: grid; grid-template-columns: 504px 1fr 73px; height: 1344px; background: #f1f4f3; font-family: "Noto Sans", sans-serif; font-size: 26px; color: #16191f; flex: none; -webkit-text-stroke: .4px; }
.side { background: #fff; box-shadow: 1px 0 2px rgba(0,28,36,.4); clip-path: inset(0 -4px 0 0); color: #545b64; letter-spacing: -.82px; }
.side-head { display: flex; justify-content: space-between; align-items: center; height: 113px; padding: 0 40px 2px 57px; border-bottom: 1px solid #e4e8e8; color: #16191f; }
.side h2 { font-size: 32px; letter-spacing: -.4px; }
nav { padding-top: 28px; }
nav a { display: block; padding-left: 57px; line-height: 54px; }
nav .current { color: #2e73b8; font-weight: 700; font-size: 25px; letter-spacing: -1.100px; }
nav hr { height: 1px; margin: 36px 35px 42px 37px; border: 0; background: #e4e8e8; }
nav .wrap { width: 440px; line-height: 40px; margin-bottom: 28px; letter-spacing: -.7px; }
.section { display: flex; align-items: center; gap: 13px; padding-left: 22px; line-height: 54px; height: 55px; }
.section b { font-size: 25px; letter-spacing: -.7px; }
.section + a, .section + a + a { letter-spacing: -.75px; }
nav hr + .spot { display: flex; align-items: center; gap: 15px; margin-top: -5px; letter-spacing: -.72px; }
.spot span { width: 42px; height: 39px; border-radius: 20px; background: #2e73b8; color: #fff; font-size: 21px; line-height: 38px; text-align: center; }
nav .tight { margin-top: 37px; margin-bottom: 36px; }
.market { letter-spacing: -.76px; }

main { padding: 36px 0 0 72px; }
.crumbs { display: grid; grid-template-columns: 149px 38px 108px 37px 443px 37px 300px; align-items: center; height: 40px; line-height: 40px; letter-spacing: -.9px; white-space: nowrap; color: #2e73b8; }
.crumbs svg { width: 16px; height: 28px; }
.crumbs .bucket { letter-spacing: -.37px; }
.crumbs b { color: #687078; font-weight: 600; letter-spacing: -.66px; }
h1 { margin-top: 45px; height: 70px; font-size: 49px; font-weight: 400; line-height: 70px; white-space: nowrap; letter-spacing: .17px; }
.info { margin-left: 19px; color: #2e73b8; font-size: 22px; font-weight: 700; letter-spacing: -1px; -webkit-text-stroke: 0; }
b, h2, h3, .hint a { -webkit-text-stroke: 0; }
.card { width: 1440px; height: 675px; margin-top: 29px; background: #fff; box-shadow: 0 2px 2px rgba(0,28,36,.5), 0 0 2px rgba(0,28,36,.3); }
.card-head { height: 147px; padding: 32px 36px 0; background: #fafafa; border-top: 1px solid #eaeded; border-bottom: 1px solid #e4e8e8; }
h3 { font-size: 32px; line-height: 44px; letter-spacing: -.72px; }
.card-head p { margin-top: 3px; font-size: 22px; line-height: 29px; letter-spacing: -.48px; color: #545b64; }
.card-body { padding: 28px 36px; letter-spacing: -.68px; white-space: nowrap; }
.label { height: 43px; line-height: 40px; }
.radio { display: flex; align-items: center; gap: 13px; height: 46.700px; }
.radio i { width: 26px; height: 26px; border: 2px solid #687078; border-radius: 50%; background: #fff; margin-left: -.5px; margin-right: .5px; }
.radio.on i { border: 8px solid #2e73b8; }
.hint { font-size: 22px; line-height: 29px; letter-spacing: -.46px; color: #687078; }
.hint.inset { margin: -3px 0 34px 39px; letter-spacing: -.48px; }
.hint b { letter-spacing: -.62px; }
.hint a { color: #2e73b8; font-weight: 700; letter-spacing: -.71px; margin-right: 8px; }
.hint .learn { letter-spacing: -1.100px; }
.hint svg { display: inline-block; width: 26px; height: 26px; vertical-align: 0; margin: -10px 0 -5px; position: relative; top: 1px; }
.label.second { height: 41px; }
.after { margin-top: 3px; }
.actions { display: flex; justify-content: flex-end; align-items: center; gap: 52px; width: 1440px; margin-top: 37px; font-weight: 700; letter-spacing: -.98px; color: #545b64; -webkit-text-stroke: 0; }
.actions span { line-height: 54px; }
button { width: 237px; height: 56px; padding: 0 0 1px; border: 0; border-radius: 4px; background: #f29d38; color: #16191f; font: inherit; letter-spacing: inherit; }
.rail { padding: 22px 0 0 23px; background: #fff; box-shadow: -1px 0 2px rgba(0,28,36,.4); clip-path: inset(0 0 0 -4px); }

.foot { display: grid; grid-template-columns: 38px 150.500px 137.500px 1544px 547px 115px 104px 200px; align-items: center; height: 55px; padding-left: 29px; border-top: 1px solid #545b64; border-bottom: 1px solid #545b64; border-radius: 0 0 20px 20px; background: linear-gradient(#262f3e, #242d3b); color: #fff; font: 400 22px/53px "Noto Sans", sans-serif; letter-spacing: -.5px; white-space: nowrap; flex: none; -webkit-text-stroke: .4px; }
.foot .lang { letter-spacing: -.95px; }
.foot .cookie { letter-spacing: -.76px; }

/* dock */
.dock { position: relative; display: flex; width: 760px; height: 53px; margin: 2px 0 0 1060px; padding-left: 4px; border-radius: 14px; background: linear-gradient(90deg, #c27c68, #bb665e 30%, #b2625c 55%, #a45f62 80%, #b5645e); box-shadow: inset 0 0 0 1.500px rgba(255,200,190,.35), 0 0 1px rgba(0,0,0,.5); font-family: Inter, sans-serif; }
.dock svg { width: 36px; height: 52px; }
.dock .bin { width: 32px; }
.sep { width: 16px; height: 36px; margin-top: 8px; background: linear-gradient(#7c3436, #7c3436) center / 1.500px 100% no-repeat; }
.sep.wide { width: 18px; }
```
